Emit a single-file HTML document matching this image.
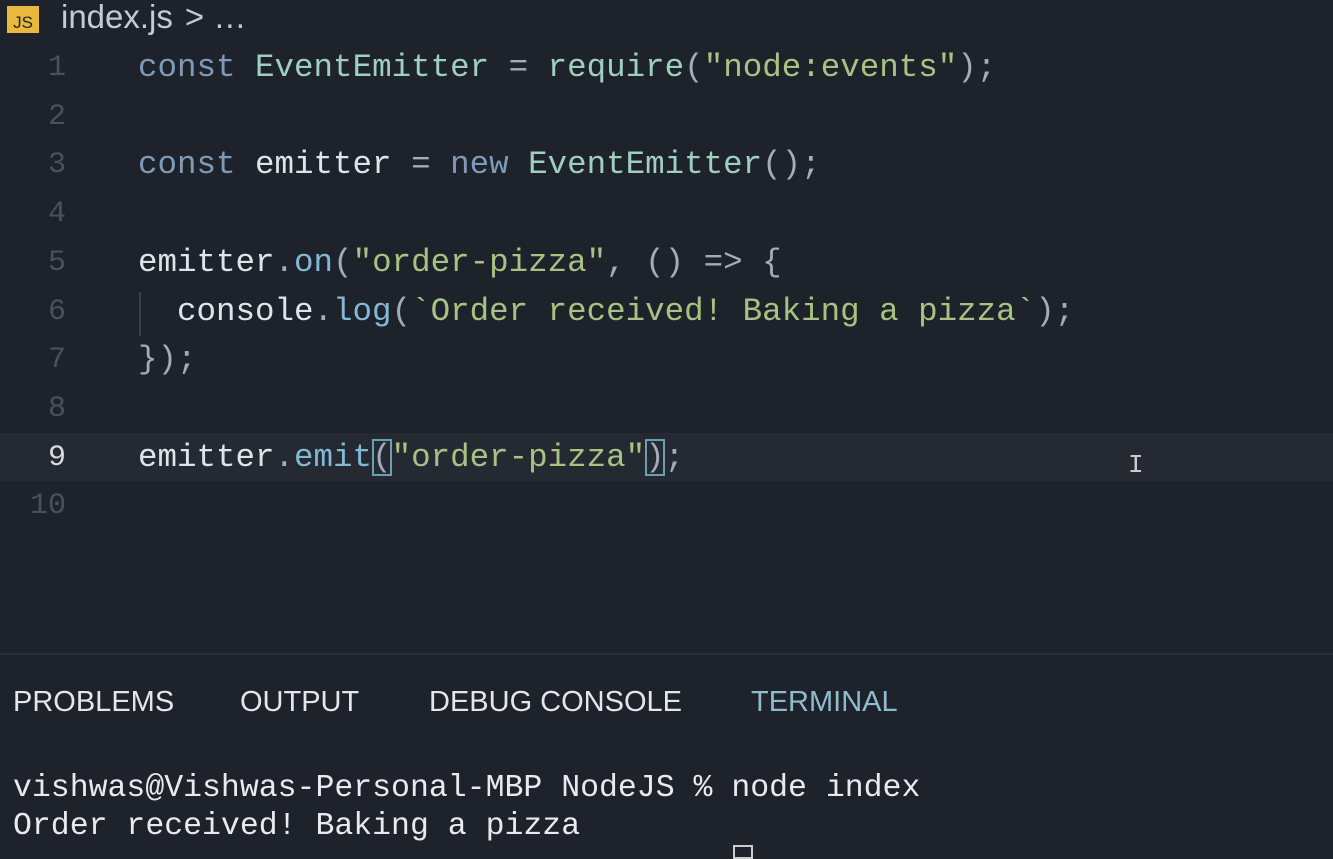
<!DOCTYPE html>
<html><head><meta charset="utf-8"><style>
body{margin:0;width:1333px;height:851px;background:#1e222a;overflow:hidden;position:relative;font-family:"Liberation Mono",monospace;}
.hdr{position:absolute;left:7px;top:0px;height:34px;display:flex;align-items:center;font-family:"Liberation Sans",sans-serif;font-size:33px;color:#c6cad2;}
.js{width:32px;height:27px;background:#e8b93d;color:#1e222a;font-size:17px;display:flex;align-items:flex-end;justify-content:center;margin-right:22px;margin-top:4px}
.ln{position:absolute;left:0;width:66px;text-align:right;font-size:30px;color:#4a515e;}
.cl{position:absolute;left:138px;font-size:32.5px;white-space:pre;color:#dfe3ea}
.k{color:#7f9ab8}.t{color:#9fcfbf}.s{color:#a8c283}.p{color:#a3acba}.f{color:#82b9d6}
.hl{position:absolute;left:0;top:433px;width:1333px;height:48px;background:#242932}
.br{outline:2px solid #6aa0b0;outline-offset:-2px}
.tab{position:absolute;top:686px;font-family:"Liberation Sans",sans-serif;font-size:29px;color:#e3e6ea;white-space:pre}
.term{position:absolute;left:13px;font-size:31.5px;color:#e8eaee;white-space:pre}
</style></head><body>
<div class="hl"></div>
<div style="position:absolute;left:0;top:653px;width:1333px;height:2px;background:#2a2f38"></div>
<div class="hdr"><div class="js">JS</div>index.js <span style="margin-left:12px">&gt; …</span></div>
<div class="ln" style="top:51px">1</div>
<div class="ln" style="top:100px">2</div>
<div class="ln" style="top:148px">3</div>
<div class="ln" style="top:197px">4</div>
<div class="ln" style="top:246px">5</div>
<div class="ln" style="top:295px">6</div>
<div class="ln" style="top:343px">7</div>
<div class="ln" style="top:392px">8</div>
<div class="ln" style="top:441px;color:#d8dbe0">9</div>
<div class="ln" style="top:489px">10</div>
<div class="cl" style="top:49px"><span class="k">const</span> <span class="t">EventEmitter</span> <span class="p">=</span> <span class="t">require</span><span class="p">(</span><span class="s">"node:events"</span><span class="p">);</span></div>
<div class="cl" style="top:146px"><span class="k">const</span> emitter <span class="p">=</span> <span class="k">new</span> <span class="t">EventEmitter</span><span class="p">();</span></div>
<div class="cl" style="top:244px">emitter<span class="p">.</span><span class="f">on</span><span class="p">(</span><span class="s">"order-pizza"</span><span class="p">, () =&gt; {</span></div>
<div style="position:absolute;left:139px;top:292px;width:2px;height:44px;background:#3a404b"></div>
<div class="cl" style="top:293px">  console<span class="p">.</span><span class="f">log</span><span class="p">(</span><span class="s">`Order received! Baking a pizza`</span><span class="p">);</span></div>
<div class="cl" style="top:341px"><span class="p">});</span></div>
<div class="cl" style="top:439px">emitter<span class="p">.</span><span class="f">emit</span><span class="p br">(</span><span class="s">"order-pizza"</span><span class="p br">)</span><span class="p">;</span></div>
<div style="position:absolute;left:1128px;top:450px;color:#ccc;font-size:26px">I</div>
<div class="tab" style="left:13px">PROBLEMS</div>
<div class="tab" style="left:240px">OUTPUT</div>
<div class="tab" style="left:429px">DEBUG CONSOLE</div>
<div class="tab" style="left:751px;color:#8fbccc">TERMINAL</div>
<div class="term" style="top:771px">vishwas@Vishwas-Personal-MBP NodeJS % node index</div>
<div class="term" style="top:809px">Order received! Baking a pizza</div>
<div style="position:absolute;left:733px;top:845px;width:16px;height:10px;border:2px solid #ccc"></div>
</body></html>
